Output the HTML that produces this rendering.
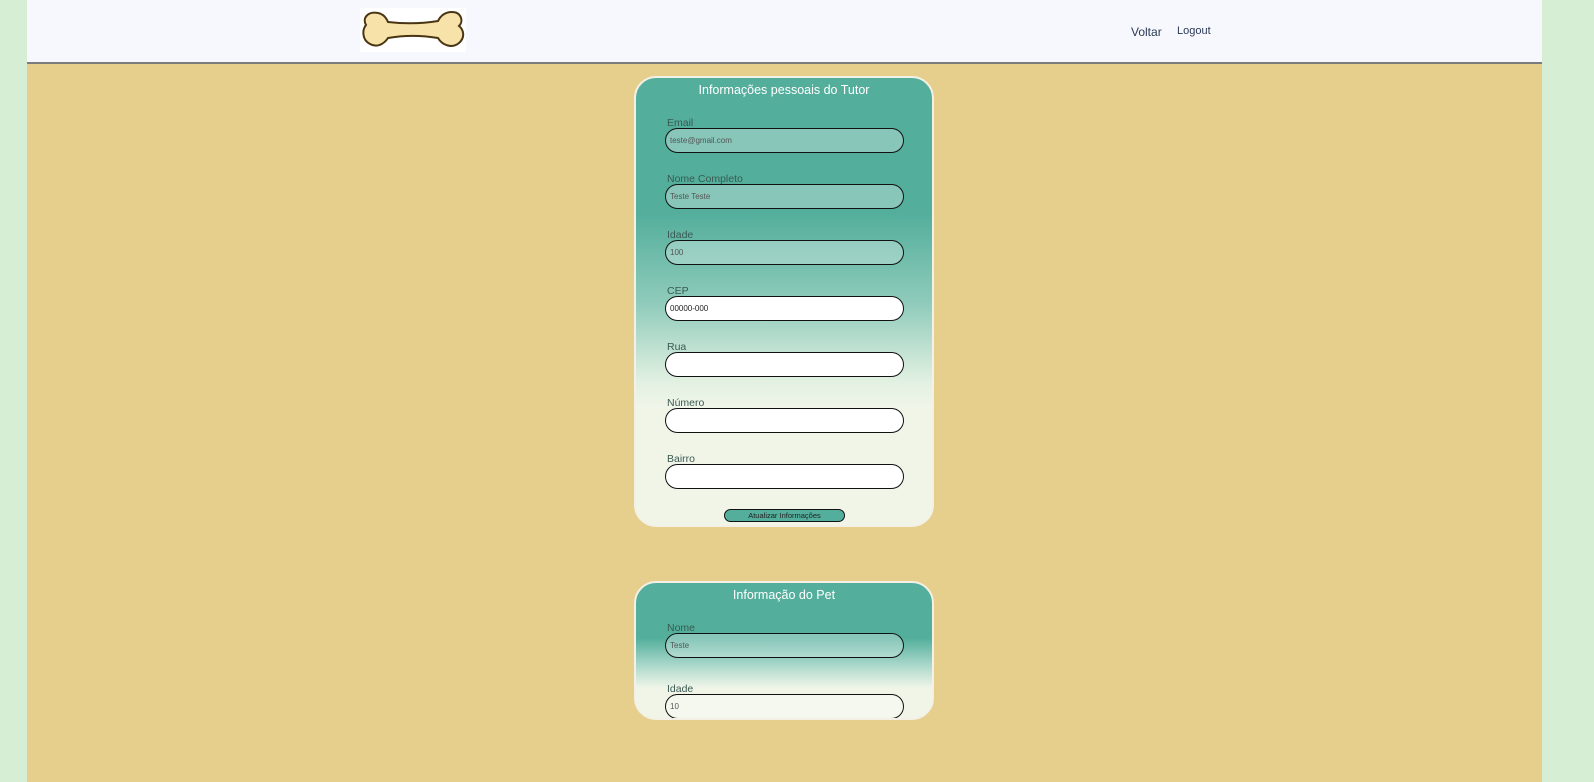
<!DOCTYPE html>
<html><head><meta charset="utf-8"><style>
*{box-sizing:border-box;margin:0;padding:0}
body{width:1594px;height:782px;background:#d6eed3;font-family:"Liberation Sans",sans-serif;position:relative;overflow:hidden}
.main{position:absolute;left:27px;top:0;width:1515px;height:782px;background:#e6cf8c}
.hdr{position:absolute;left:27px;top:0;width:1515px;height:64px;background:#f7f8fd;border-bottom:2px solid #7b7b7b}
.nav{position:absolute;top:25px;font-size:12px;color:#2b3a55}
.card{position:absolute;left:634px;width:300px;border:2px solid #f3f1e6;border-radius:22px;overflow:hidden}
.c1{top:76px;height:451px;background:linear-gradient(#53ae9b 0px,#53ae9b 135px,#8fcbbb 225px,#e3f1e2 305px,#f0f5e8 330px)}
.c2{top:581px;height:139px;background:linear-gradient(#53ae9b 0px,#53ae9b 55px,#b3dccf 85px,#f0f5e8 105px)}
.title{position:absolute;top:5px;left:0;width:100%;text-align:center;color:#fff;font-size:12.5px}
.lbl{position:absolute;left:31px;font-size:10.5px;color:#3a5a54}
.inp{position:absolute;left:29px;width:239px;height:25px;border:1.3px solid #111;border-radius:13px;background:rgba(255,255,255,.3);font-size:8px;color:#555;padding:7px 0 0 4px}
.w{background:#fff;color:#222}
.btn{position:absolute;left:88px;top:431px;width:121px;height:13px;border:1.2px solid #111;border-radius:7px;background:#53ae9b;font-size:7.5px;text-align:center;color:#222;line-height:11px}
</style></head><body>
<div class="main"></div>
<div class="hdr">
<svg style="position:absolute;left:333px;top:8px" width="106" height="44" viewBox="0 0 106 44"><rect width="106" height="44" fill="#fff"/><path d="M18 5 C8 3 2 10 6 17 C2 22 2 32 10 36 C17 40 24 36 28 30 C45 27 60 27 78 30 C82 37 92 41 99 35 C106 29 103 21 99 18 C104 13 101 4 92 4 C84 4 80 9 78 13 C60 16 45 16 28 14 C26 9 23 6 18 5 Z" fill="#f7e2aa" stroke="#4a3512" stroke-width="2"/></svg>
<span class="nav" style="left:1104px">Voltar</span>
<span class="nav" style="left:1150px;font-size:11px">Logout</span>
</div>
<div class="card c1">
<div class="title">Informações pessoais do Tutor</div>
<div class="lbl" style="top:39px">Email</div><div class="inp" style="top:50px">teste@gmail.com</div>
<div class="lbl" style="top:95px">Nome Completo</div><div class="inp" style="top:106px">Teste Teste</div>
<div class="lbl" style="top:151px">Idade</div><div class="inp" style="top:162px">100</div>
<div class="lbl" style="top:207px">CEP</div><div class="inp w" style="top:218px">00000-000</div>
<div class="lbl" style="top:263px">Rua</div><div class="inp w" style="top:274px"></div>
<div class="lbl" style="top:319px">Número</div><div class="inp w" style="top:330px"></div>
<div class="lbl" style="top:375px">Bairro</div><div class="inp w" style="top:386px"></div>
<div class="btn">Atualizar Informações</div>
</div>
<div class="card c2">
<div class="title">Informação do Pet</div>
<div class="lbl" style="top:39px">Nome</div><div class="inp" style="top:50px">Teste</div>
<div class="lbl" style="top:100px">Idade</div><div class="inp" style="top:111px">10</div>
</div>
</body></html>
